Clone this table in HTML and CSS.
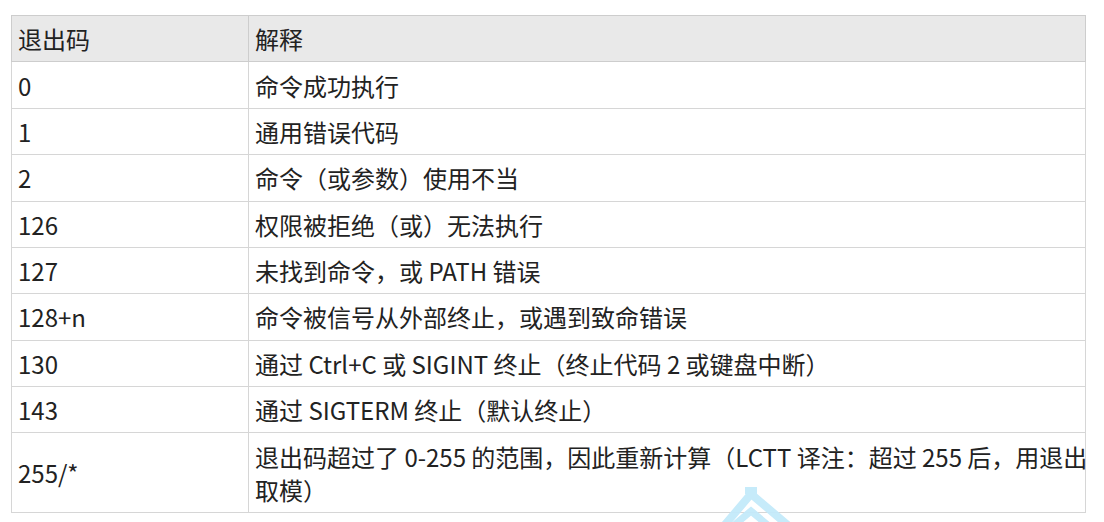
FILE: index.html
```html
<!DOCTYPE html>
<html lang="zh-CN">
<head>
<meta charset="utf-8">
<link rel="stylesheet" href="styles.css">
</head>
<body>
<div class="page">
  <table class="codes">
    <colgroup><col class="c1"><col class="c2"></colgroup>
    <thead>
      <tr><th>退出码</th><th>解释</th></tr>
    </thead>
    <tbody>
      <tr><td>0</td><td>命令成功执行</td></tr>
      <tr><td>1</td><td>通用错误代码</td></tr>
      <tr><td>2</td><td>命令（或参数）使用不当</td></tr>
      <tr><td>126</td><td>权限被拒绝（或）无法执行</td></tr>
      <tr><td>127</td><td>未找到命令，或 PATH 错误</td></tr>
      <tr><td>128+n</td><td>命令被信号从外部终止，或遇到致命错误</td></tr>
      <tr><td>130</td><td>通过 Ctrl+C 或 SIGINT 终止（终止代码 2 或键盘中断）</td></tr>
      <tr><td>143</td><td>通过 SIGTERM 终止（默认终止）</td></tr>
      <tr><td>255/*</td><td>退出码超过了 0-255 的范围，因此重新计算（LCTT 译注：超过 255 后，用退出<br>取模）</td></tr>
    </tbody>
  </table>
  <svg class="watermark" width="90" height="40" viewBox="0 0 90 40" aria-hidden="true">
    <rect x="25" y="0" width="12" height="7" fill="#c4eafa"/>
    <polyline points="3,40 31,7 70,40" fill="none" stroke="#c4eafa" stroke-width="8"/>
    <polyline points="12,40 31,24 50,40" fill="none" stroke="#c4eafa" stroke-width="7"/>
  </svg>
</div>
</body>
</html>
```
FILE: styles.css
```css
html, body {
  margin: 0;
  padding: 0;
  background: #ffffff;
}

.page {
  position: relative;
  padding: 15px 0 0 11px;
  height: 507px;
  overflow: hidden;
}

.codes {
  border-collapse: collapse;
  table-layout: fixed;
  width: 1074px;
  font-family: "Noto Sans CJK SC", "Noto Sans", sans-serif;
  font-size: 24px;
  line-height: 33px;
  color: #222222;
  border: 1px solid #c6c6c6;
}

.c1 { width: 237px; }
.c2 { width: 837px; }

.codes th,
.codes td {
  border: 1px solid #d6d6d6;
  padding: 6.2px 6px;
  text-align: left;
  vertical-align: middle;
  font-weight: normal;
  white-space: nowrap;
  overflow: visible;
}

.codes thead th {
  background: #e9e9e9;
  border-color: #cdcdcd;
}

.watermark {
  position: absolute;
  left: 720px;
  top: 487px;
  opacity: 0.95;
}
```
